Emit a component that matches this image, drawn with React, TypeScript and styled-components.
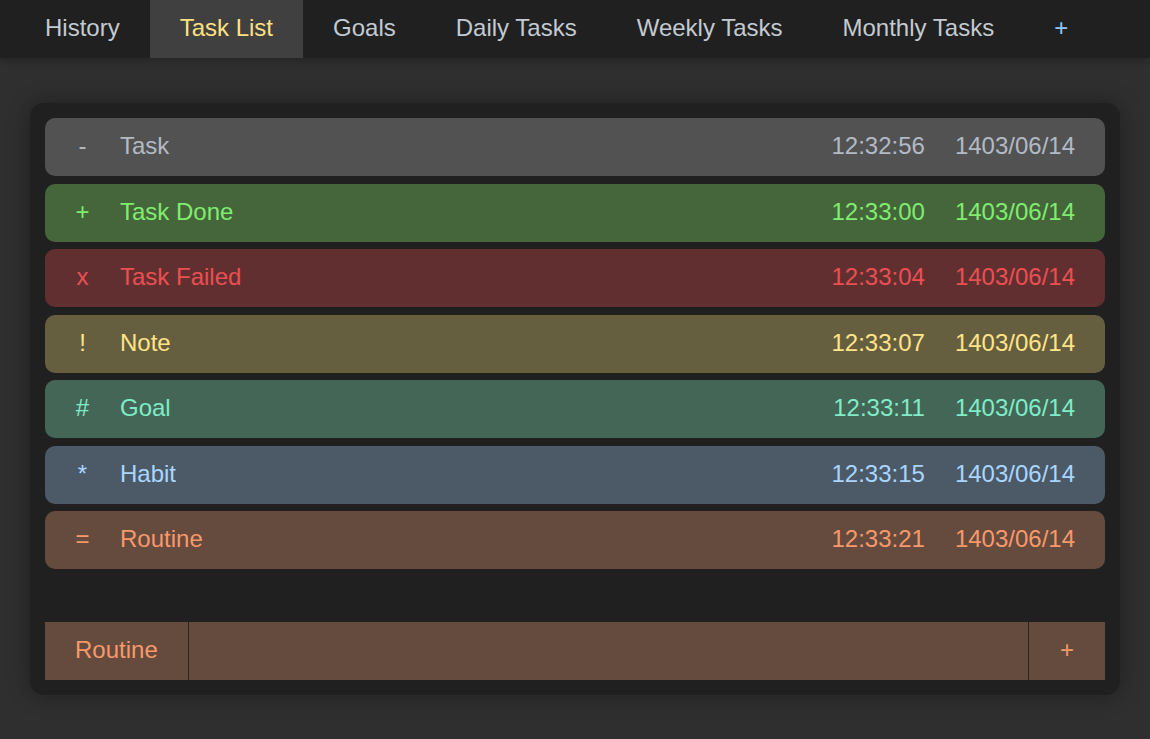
import React from "react";
import styled, { createGlobalStyle } from "styled-components";

const Global = createGlobalStyle`
  html, body { margin: 0; padding: 0; background: #2f2f2f; }
  body { font-family: "Liberation Sans", Arial, sans-serif; font-size: 24px; }
  * { box-sizing: border-box; }
`;

const Page = styled.div`
  min-height: 739px;
  background: #2f2f2f;
`;

const Nav = styled.nav`
  display: flex;
  height: 58px;
  padding-left: 15px;
  background: #202020;
  box-shadow: 0 2px 8px rgba(0, 0, 0, 0.25);
  position: relative;
`;

const Tab = styled.div<{ $active?: boolean; $accent?: boolean }>`
  display: flex;
  align-items: center;
  padding: 0 30px 2px;
  height: 58px;
  color: ${(p) => (p.$active ? "#ffe183" : p.$accent ? "#8ec8ff" : "#c3cad2")};
  background: ${(p) => (p.$active ? "#404040" : "transparent")};
  white-space: nowrap;
`;

const Main = styled.main`
  padding: 45px 30px 0;
`;

const Panel = styled.section`
  background: #202020;
  border-radius: 14px;
  padding: 15px 15px 14.5px;
  box-shadow: 0 0 22px rgba(0, 0, 0, 0.35);
  display: flex;
  flex-direction: column;
`;

const List = styled.div`
  display: flex;
  flex-direction: column;
  gap: 7.5px;
`;

type Kind = { bg: string; fg: string };

const Row = styled.div<{ $k: Kind }>`
  display: flex;
  align-items: center;
  height: 58px;
  border-radius: 10px;
  background: ${(p) => p.$k.bg};
  color: ${(p) => p.$k.fg};
  padding: 0 30px 2px 0;
`;

const Sym = styled.span`
  width: 75px;
  text-align: center;
  flex-shrink: 0;
`;

const Title = styled.span`
  flex: 1;
`;

const Time = styled.span`
  margin-right: 30px;
`;

const DateText = styled.span``;

const InputBar = styled.div<{ $k: Kind }>`
  margin-top: 53px;
  display: flex;
  height: 58px;
  background: ${(p) => p.$k.bg};
  color: ${(p) => p.$k.fg};
`;

const TypeCell = styled.div`
  display: flex;
  align-items: center;
  padding: 0 30px 2px;
  border-right: 1px solid #262626;
`;

const Field = styled.div`
  flex: 1;
`;

const AddCell = styled.div`
  width: 77px;
  display: flex;
  align-items: center;
  justify-content: center;
  padding-bottom: 2px;
  border-left: 1px solid #262626;
`;

const K = {
  task: { bg: "#525252", fg: "#b2bac4" },
  done: { bg: "#45663a", fg: "#80ec70" },
  fail: { bg: "#622f31", fg: "#ea4f52" },
  note: { bg: "#665f3f", fg: "#ffe488" },
  goal: { bg: "#436656", fg: "#80ecc8" },
  habit: { bg: "#4c5a68", fg: "#a9d6ff" },
  routine: { bg: "#654a3e", fg: "#f7996a" },
};

const rows = [
  { s: "-", t: "Task", time: "12:32:56", k: K.task },
  { s: "+", t: "Task Done", time: "12:33:00", k: K.done },
  { s: "x", t: "Task Failed", time: "12:33:04", k: K.fail },
  { s: "!", t: "Note", time: "12:33:07", k: K.note },
  { s: "#", t: "Goal", time: "12:33:11", k: K.goal },
  { s: "*", t: "Habit", time: "12:33:15", k: K.habit },
  { s: "=", t: "Routine", time: "12:33:21", k: K.routine },
];

const tabs = ["History", "Task List", "Goals", "Daily Tasks", "Weekly Tasks", "Monthly Tasks"];

export default function App() {
  return (
    <Page>
      <Global />
      <Nav>
        {tabs.map((t) => (
          <Tab key={t} $active={t === "Task List"}>
            {t}
          </Tab>
        ))}
        <Tab $accent>+</Tab>
      </Nav>
      <Main>
        <Panel>
          <List>
            {rows.map((r) => (
              <Row key={r.t} $k={r.k}>
                <Sym>{r.s}</Sym>
                <Title>{r.t}</Title>
                <Time>{r.time}</Time>
                <DateText>1403/06/14</DateText>
              </Row>
            ))}
          </List>
          <InputBar $k={K.routine}>
            <TypeCell>Routine</TypeCell>
            <Field />
            <AddCell>+</AddCell>
          </InputBar>
        </Panel>
      </Main>
    </Page>
  );
}
